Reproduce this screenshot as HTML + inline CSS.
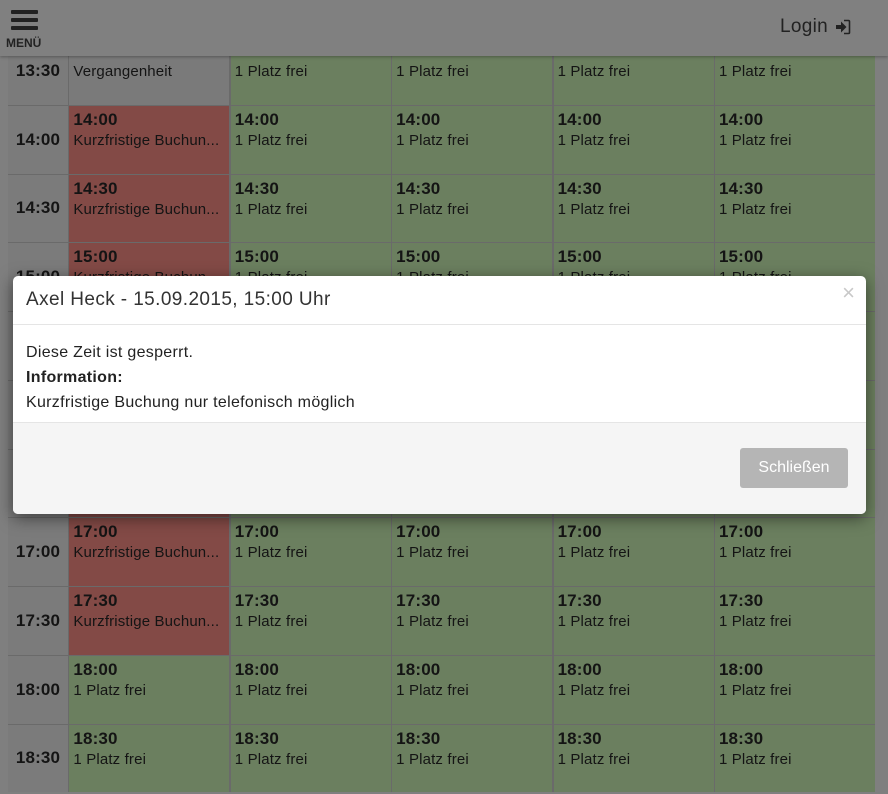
<!DOCTYPE html>
<html><head><meta charset="utf-8"><style>
*{box-sizing:border-box;margin:0;padding:0}
body{width:888px;height:794px;overflow:hidden;background:#7f7f7f;font-family:"Liberation Sans",sans-serif;color:#141414;position:relative}
.hdr{position:absolute;left:0;top:0;width:888px;height:56px;background:#808080;box-shadow:0 1px 3px rgba(0,0,0,.3);z-index:2}
.burger{position:absolute;left:11px;top:10px;width:27px}
.burger i{display:block;height:4px;background:#222;margin-bottom:4px;border-radius:1px}
.menu{position:absolute;left:6px;top:36px;font-size:12px;font-weight:bold;color:#222}
.login{position:absolute;left:780px;top:16px;font-size:19px;color:#222;letter-spacing:.3px}
.login svg{position:absolute;left:55px;top:3px}
.grid{position:absolute;left:8px;top:37px;display:grid;grid-template-columns:60px 160px 160px 160px 160px 160px;column-gap:1.4px;row-gap:1px;grid-template-rows:repeat(11,67.75px);background:#6a6a6a}
.grid div{padding:3px 4px 0 4px;font-size:15px;line-height:20px;white-space:nowrap;overflow:hidden;letter-spacing:.15px}
.t{background:#7b7b7b;font-weight:bold;font-size:17px!important;display:flex;align-items:center;justify-content:center;padding:0!important}
.g{background:#6b7f5f}.r{background:#834a46}.p{background:#7a7a7a}
.grid b{display:block;font-size:17px;line-height:22px;height:22px;font-weight:bold}
.modal{position:absolute;left:13px;top:276px;width:853px;height:238px;background:#fff;border-radius:5px;box-shadow:0 4px 16px rgba(0,0,0,.5);z-index:3;overflow:hidden}
.mh{height:49px;border-bottom:1px solid #e5e5e5;padding:13px 13px;font-size:19px;color:#333;letter-spacing:.4px}
.x{position:absolute;right:11px;top:4px;font-size:22px;color:#c8c8c8}
.mb{padding:15px 13px;font-size:16px;line-height:25px;color:#222;height:98px;border-bottom:1px solid #e5e5e5;letter-spacing:.3px}
.mf{background:#f5f5f5;height:91px;position:relative}
.btn{position:absolute;left:727px;top:25px;width:108px;height:40px;background:#b5b5b5;border-radius:3px;color:#fff;font-size:16px;text-align:center;line-height:40px}
</style></head><body>
<div class="hdr"><div class="burger"><i></i><i></i><i></i></div><div class="menu">MENÜ</div><div class="login">Login<svg width="16" height="16" viewBox="0 0 16 16"><path d="M1 6h5V2.5L11.5 8 6 13.5V10H1z" fill="#222"/><path d="M9 1.5h4.5a1 1 0 0 1 1 1v11a1 1 0 0 1-1 1H9" fill="none" stroke="#222" stroke-width="1.6"/></svg></div></div>
<div class="grid">
<div class="t">13:30</div><div class="p"><b></b>Vergangenheit</div><div class="g"><b></b>1 Platz frei</div><div class="g"><b></b>1 Platz frei</div><div class="g"><b></b>1 Platz frei</div><div class="g"><b></b>1 Platz frei</div>
<div class="t">14:00</div><div class="r"><b>14:00</b>Kurzfristige Buchun...</div><div class="g"><b>14:00</b>1 Platz frei</div><div class="g"><b>14:00</b>1 Platz frei</div><div class="g"><b>14:00</b>1 Platz frei</div><div class="g"><b>14:00</b>1 Platz frei</div>
<div class="t">14:30</div><div class="r"><b>14:30</b>Kurzfristige Buchun...</div><div class="g"><b>14:30</b>1 Platz frei</div><div class="g"><b>14:30</b>1 Platz frei</div><div class="g"><b>14:30</b>1 Platz frei</div><div class="g"><b>14:30</b>1 Platz frei</div>
<div class="t">15:00</div><div class="r"><b>15:00</b>Kurzfristige Buchun...</div><div class="g"><b>15:00</b>1 Platz frei</div><div class="g"><b>15:00</b>1 Platz frei</div><div class="g"><b>15:00</b>1 Platz frei</div><div class="g"><b>15:00</b>1 Platz frei</div>
<div class="t">15:30</div><div class="r"><b>15:30</b>Kurzfristige Buchun...</div><div class="g"><b>15:30</b>1 Platz frei</div><div class="g"><b>15:30</b>1 Platz frei</div><div class="g"><b>15:30</b>1 Platz frei</div><div class="g"><b>15:30</b>1 Platz frei</div>
<div class="t">16:00</div><div class="r"><b>16:00</b>Kurzfristige Buchun...</div><div class="g"><b>16:00</b>1 Platz frei</div><div class="g"><b>16:00</b>1 Platz frei</div><div class="g"><b>16:00</b>1 Platz frei</div><div class="g"><b>16:00</b>1 Platz frei</div>
<div class="t">16:30</div><div class="r"><b>16:30</b>Kurzfristige Buchun...</div><div class="g"><b>16:30</b>1 Platz frei</div><div class="g"><b>16:30</b>1 Platz frei</div><div class="g"><b>16:30</b>1 Platz frei</div><div class="g"><b>16:30</b>1 Platz frei</div>
<div class="t">17:00</div><div class="r"><b>17:00</b>Kurzfristige Buchun...</div><div class="g"><b>17:00</b>1 Platz frei</div><div class="g"><b>17:00</b>1 Platz frei</div><div class="g"><b>17:00</b>1 Platz frei</div><div class="g"><b>17:00</b>1 Platz frei</div>
<div class="t">17:30</div><div class="r"><b>17:30</b>Kurzfristige Buchun...</div><div class="g"><b>17:30</b>1 Platz frei</div><div class="g"><b>17:30</b>1 Platz frei</div><div class="g"><b>17:30</b>1 Platz frei</div><div class="g"><b>17:30</b>1 Platz frei</div>
<div class="t">18:00</div><div class="g"><b>18:00</b>1 Platz frei</div><div class="g"><b>18:00</b>1 Platz frei</div><div class="g"><b>18:00</b>1 Platz frei</div><div class="g"><b>18:00</b>1 Platz frei</div><div class="g"><b>18:00</b>1 Platz frei</div>
<div class="t">18:30</div><div class="g"><b>18:30</b>1 Platz frei</div><div class="g"><b>18:30</b>1 Platz frei</div><div class="g"><b>18:30</b>1 Platz frei</div><div class="g"><b>18:30</b>1 Platz frei</div><div class="g"><b>18:30</b>1 Platz frei</div>
</div>
<div class="modal">
<div class="mh">Axel Heck - 15.09.2015, 15:00 Uhr</div><div class="x">×</div>
<div class="mb">Diese Zeit ist gesperrt.<br><b>Information:</b><br>Kurzfristige Buchung nur telefonisch möglich</div>
<div class="mf"><div class="btn">Schließen</div></div>
</div>
</body></html>
